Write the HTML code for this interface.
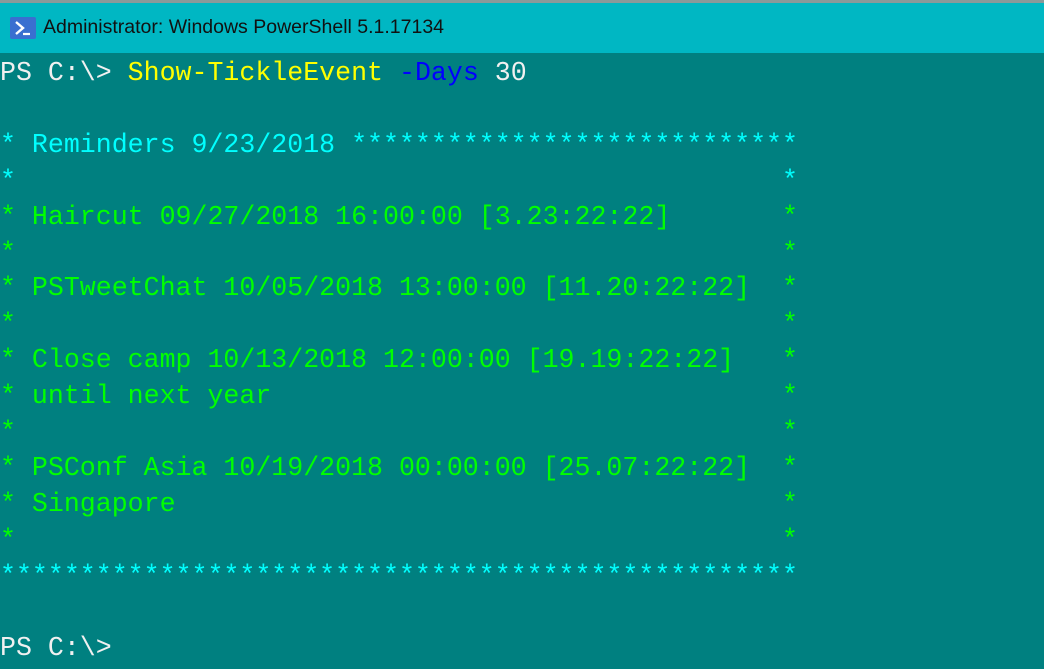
<!DOCTYPE html>
<html><head><meta charset="utf-8"><style>
html,body{margin:0;padding:0;width:1044px;height:669px;overflow:hidden;background:#008080;}
.top{position:absolute;left:0;top:0;width:1044px;height:3px;background:#8a9a9a;}
.bar{position:absolute;left:0;top:3px;width:1044px;height:50px;background:#00b7c3;}
.icon{position:absolute;left:10px;top:14px;width:26px;height:22px;background:#3a6fd0;border-radius:2px;}
.title{position:absolute;left:43px;top:13px;font:19.5px "Liberation Sans",sans-serif;color:#111;}
.con{position:absolute;left:0;top:56px;font-family:"Liberation Mono",monospace;font-size:26.6px;line-height:35.9px;white-space:pre;color:#f0f0f0;}
.y{color:#ffff00}.b{color:#0000ff}.c{color:#00ffff}.g{color:#00ff00}
</style></head><body>
<div class="top"></div>
<div class="bar"><div class="icon"><svg width="26" height="22" viewBox="0 0 26 22"><path d="M6 5 L13 11 L6 17" stroke="#fff" stroke-width="2.4" fill="none"/><path d="M13 17 H20" stroke="#fff" stroke-width="2.2"/></svg></div><div class="title">Administrator: Windows PowerShell 5.1.17134</div></div>
<div class="con">PS C:\&gt; <span class="y">Show-TickleEvent</span> <span class="b">-Days</span> 30

<span class="c">* Reminders 9/23/2018 ****************************</span>
<span class="c">*                                                *</span>
<span class="g">* Haircut 09/27/2018 16:00:00 [3.23:22:22]       *</span>
<span class="g">*                                                *</span>
<span class="g">* PSTweetChat 10/05/2018 13:00:00 [11.20:22:22]  *</span>
<span class="g">*                                                *</span>
<span class="g">* Close camp 10/13/2018 12:00:00 [19.19:22:22]   *</span>
<span class="g">* until next year                                *</span>
<span class="g">*                                                *</span>
<span class="g">* PSConf Asia 10/19/2018 00:00:00 [25.07:22:22]  *</span>
<span class="g">* Singapore                                      *</span>
<span class="g">*                                                *</span>
<span class="c">**************************************************</span>

PS C:\&gt;</div>
</body></html>
